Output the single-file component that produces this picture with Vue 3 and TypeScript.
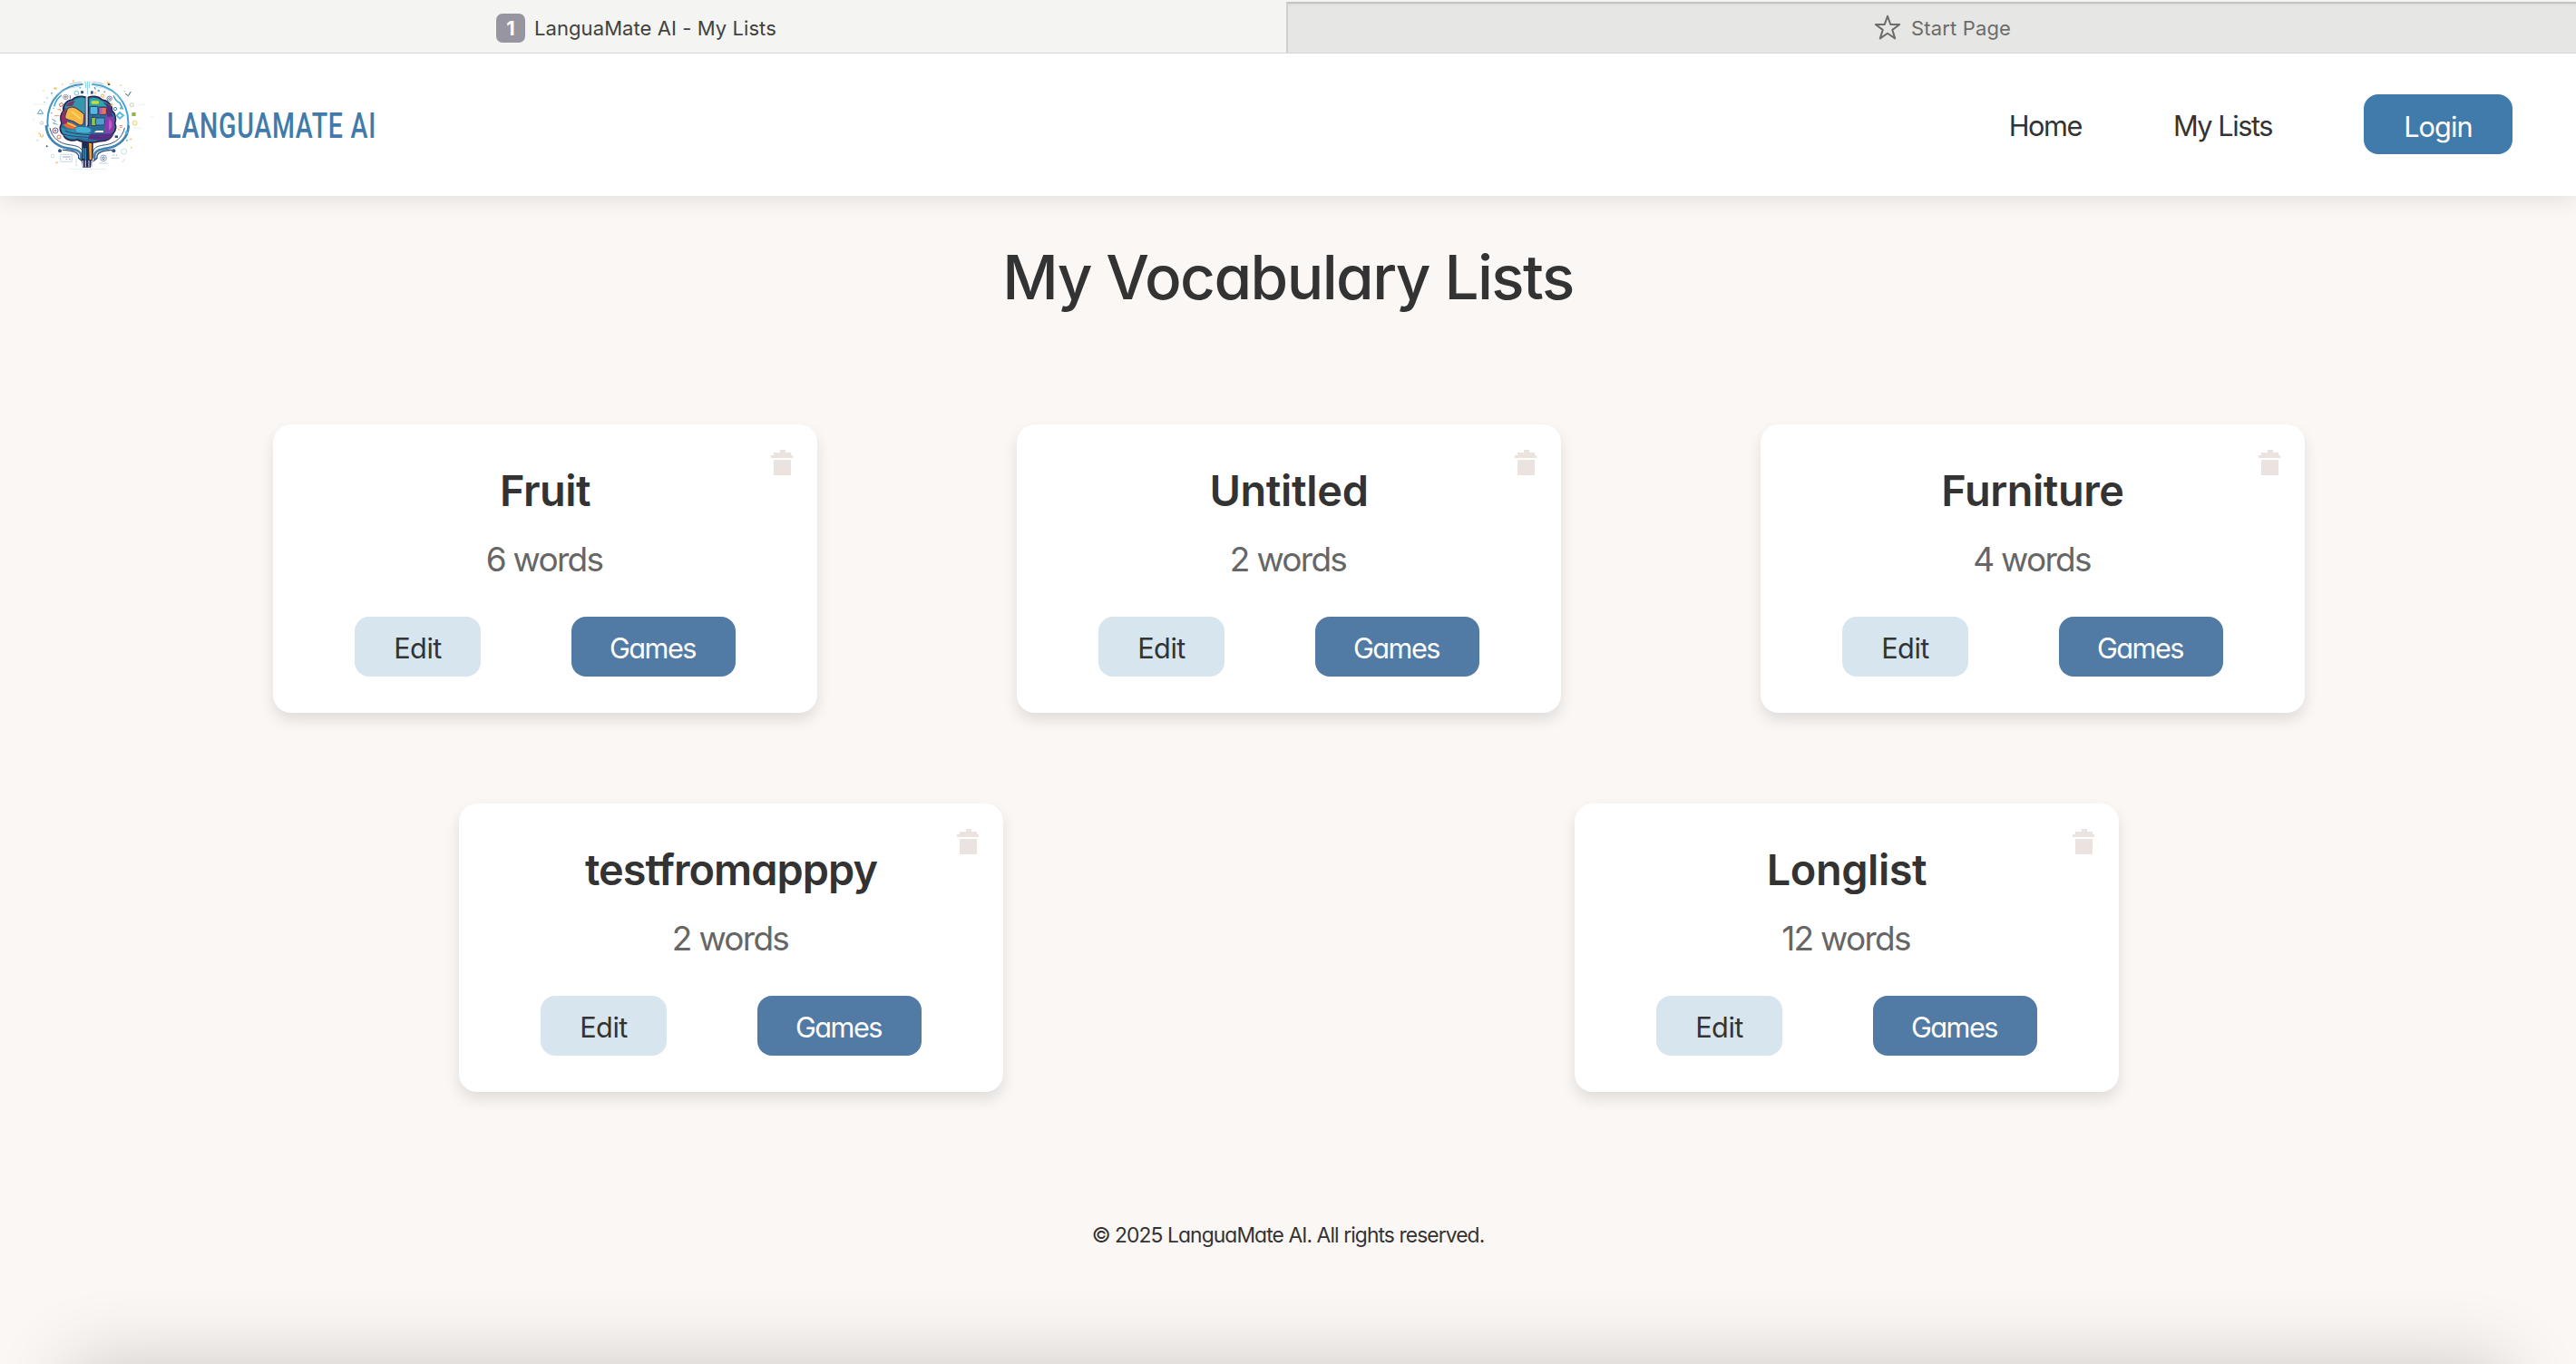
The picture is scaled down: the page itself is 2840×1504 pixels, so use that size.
<script setup lang="ts">
interface VocabList {
  name: string
  words: number
  tracking: number
}

const rows: VocabList[][] = [
  [
    { name: 'Fruit', words: 6, tracking: -0.5 },
    { name: 'Untitled', words: 2, tracking: -0.3 },
    { name: 'Furniture', words: 4, tracking: -0.4 },
  ],
  [
    { name: 'testfromapppy', words: 2, tracking: -0.95 },
    { name: 'Longlist', words: 12, tracking: -0.4 },
  ],
]
</script>

<template>
  <div class="page">
    <div class="tabs">
      <div class="tab tab-active">
        <span class="badge">1</span>
        <span class="tab-title">LanguaMate AI - My Lists</span>
      </div>
      <div class="tab tab-idle">
        <svg class="star" viewBox="0 0 30 28" width="30" height="28">
          <path d="M15 1.8 18.3 11H28.2L20.3 16.9 23.2 26.4 15 20.7 6.8 26.4 9.7 16.9 1.8 11H11.7Z" fill="none" stroke="#6c6c6a" stroke-width="2" stroke-linejoin="round" />
        </svg>
        <span class="tab-title">Start Page</span>
      </div>
    </div>

    <header class="header">
      <div class="brand">
        <svg class="logo" viewBox="78 72 441 312" width="147" height="104">
          <!-- halo rings -->
          <g fill="none" stroke-linecap="round">
            <path d="M272 99C205 101 158 152 157 222C157 228 158 232 158 238" stroke="#4a93c0" stroke-width="6" />
            <path d="M306 99C372 102 422 152 424 222V238" stroke="#4aa5cc" stroke-width="6" />
            <path d="M153 238C156 275 182 303 222 310C246 314 262 317 268 330V345" stroke="#3f84b2" stroke-width="8" />
            <path d="M425 238C423 275 396 303 356 310C332 314 318 317 313 330V345" stroke="#3f84b2" stroke-width="8" />
            <path d="M165 244C172 276 196 294 228 299C254 302 268 306 274 322M412 244C404 276 382 294 350 299C326 302 312 306 307 322" stroke="#2f5379" stroke-width="3" />
            <path d="M208 316C240 318 254 322 260 334V343L272 353M370 316C340 318 326 322 321 334V343L309 353" stroke="#34507b" stroke-width="4" />
            <path d="M172 150Q200 112 262 106M316 106Q378 114 406 154" stroke="#9bd3e5" stroke-width="2" />
            <path d="M232 98Q250 92 270 92M306 92Q326 91 342 98" stroke="#7fa9c6" stroke-width="2" />
            <path d="M180 170Q184 150 202 136M376 138Q384 156 396 160L406 180" stroke="#45a5cd" stroke-width="5" />
            <path d="M283 110V94Q283 90 280 90M289 132V90M295 110V94Q295 90 298 90" stroke="#7ccfe3" stroke-width="3" />
          </g>
          <!-- stem -->
          <path d="M271 284H308V340L300 374H274L270 352Z" fill="#202b50" />
          <path d="M294 290H303V348H296Z" fill="#f1a43a" />
          <path d="M276 310V345M283 310V350" stroke="#3c91be" stroke-width="4" />
          <path d="M274 352V370M283 352V372M294 352V372M303 352V370" stroke="#c7b5d8" stroke-width="4" stroke-linecap="round" />
          <!-- brain -->
          <path d="M284 142C268 134 246 142 238 150C218 152 206 172 210 186C198 200 200 218 204 228C194 244 200 260 210 266C216 284 240 288 256 282C270 292 310 294 330 287C352 288 370 278 372 264C386 252 384 236 380 228C386 210 380 194 370 186C372 168 356 152 338 150C326 138 304 136 292 142V236H284Z" fill="#2a6d96" stroke="#28244f" stroke-width="5" stroke-linejoin="round" />
          <path d="M281 146V196L246 172L216 178C216 162 230 154 242 154C252 144 268 140 281 146Z" fill="#3597ad" />
          <path d="M218 172C224 158 238 154 248 154L240 170Z" fill="#793768" />
          <path d="M207 190L220 182L216 208L226 226L208 232C201 216 204 204 207 190Z" fill="#8f3169" />
          <path d="M224 178Q240 170 252 178L274 194Q280 198 278 206L276 228Q274 236 264 234L244 222L220 214Q213 210 216 201Z" fill="#f6b944" stroke="#552c4c" stroke-width="3" />
          <path d="M236 188 266 212" stroke="#ffdc82" stroke-width="4" />
          <path d="M208 232L236 226L256 238L248 248L222 244Z" fill="#e66e36" />
          <path d="M222 226 252 240" stroke="#ffc24d" stroke-width="5" />
          <path d="M296 146Q320 140 334 152L354 162V172H296Z" fill="#2ca7ab" />
          <rect x="302" y="154" width="25" height="10" rx="4" fill="#d5d936" />
          <path d="M340 158Q368 164 368 188L374 206H354V172Z" fill="#543080" />
          <rect x="297" y="172" width="27" height="27" rx="5" fill="#55b9df" stroke="#233763" stroke-width="3" />
          <rect x="327" y="175" width="25" height="24" rx="4" fill="#e77850" stroke="#4d2e69" stroke-width="3" />
          <path d="M330 178H338V196H330Z" fill="#ad62b6" />
          <path d="M350 206H374Q382 218 376 230Q384 244 368 260L344 262Z" fill="#8a3dac" />
          <path d="M362 212Q380 236 360 252V232Z" fill="#c45fca" />
          <rect x="302" y="208" width="18" height="28" rx="4" fill="#92c744" stroke="#26365c" stroke-width="3" />
          <rect x="316" y="210" width="30" height="24" rx="5" fill="#4e9fca" stroke="#333b77" stroke-width="3" />
          <path d="M202 242Q224 252 250 248L286 260H366Q350 282 320 282L262 276Q224 284 208 264Z" fill="#2b93b2" />
          <path d="M300 262H378Q370 284 330 284L290 280Z" fill="#563084" />
          <path d="M248 242Q260 236 288 240Q304 244 302 254Q298 262 276 261L250 258Z" fill="#43b3d5" stroke="#286286" stroke-width="2" />
          <path d="M204 262Q240 276 330 274M214 252Q240 264 300 266" fill="none" stroke="#39386f" stroke-width="3" />
          <path d="M318 252 342 252V258H312Z" fill="#fff" />
          <path d="M286 140V238" stroke="#b9e1ec" stroke-width="5" />
          <!-- orbiting glyphs -->
          <g fill="none" stroke-width="3">
            <path d="M124 196 133 182 143 196Z" stroke="#5aa6cc" />
            <path d="M415 130 424 137 433 123" stroke="#3c5f87" />
            <circle cx="217" cy="141" r="8" stroke="#a698a5" /><circle cx="217" cy="141" r="3" stroke="#80768c" />
            <circle cx="253" cy="128" r="7" stroke="#69c0d7" /><circle cx="362" cy="146" r="8" stroke="#6e7b99" /><circle cx="362" cy="146" r="3" stroke="#6e7b99" />
            <circle cx="339" cy="137" r="5" stroke="#eeb04c" /><circle cx="381" cy="180" r="5" stroke="#4485ae" />
            <circle cx="183" cy="252" r="9" stroke="#77607f" /><circle cx="183" cy="252" r="3" stroke="#77607f" />
            <circle cx="195" cy="273" r="6" stroke="#e37554" /><circle cx="410" cy="321" r="9" stroke="#a7d3e4" stroke-width="2" />
            <circle cx="138" cy="227" r="5" stroke="#b8cbd8" /><circle cx="446" cy="227" r="7" stroke="#efc678" /><circle cx="436" cy="167" r="6" stroke="#b8d6ab" />
            <circle cx="174" cy="336" r="5" stroke="#b6d3df" stroke-width="2" />
            <circle cx="342" cy="343" r="10" stroke="#8d9cb9" /><circle cx="342" cy="343" r="4" stroke="#5f7193" />
            <path d="M328 360H357M368 343H394M372 335 376 330 380 336M386 330V337" stroke="#a3b2c8" stroke-width="2" />
            <rect x="200" y="331" width="38" height="24" rx="2" stroke="#a7c8db" stroke-width="2" />
            <path d="M207 339H233M218 347H222M228 347H233" stroke="#95a7c3" />
            <path d="M252 344V366Q254 372 256 366M402 355Q412 355 413 344" stroke="#aed4e2" stroke-width="2" />
            <path d="M126 262Q132 258 134 266Q132 276 142 272V264" stroke="#f1b84b" />
            <path d="M196 165 204 160 210 166 200 174Z" stroke="#bf6e51" /><path d="M190 182H200V188M180 203H196" stroke="#e69a68" />
            <path d="M172 214 184 220 176 228 190 232M168 194H173M175 178H179" stroke="#5aa5c7" />
            <path d="M386 202 396 192 408 202 396 212Z" stroke="#59badb" stroke-width="6" />
            <path d="M364 166 372 162M366 170 374 167" stroke="#eda144" />
            <path d="M394 236H406M396 241H404" stroke="#e18d68" /><path d="M232 136V146M270 120V130M312 108 316 116" stroke="#426d98" />
            <path d="M112 165H152M498 205H508M456 168 480 165M440 242 470 245" stroke="#d9e9ec" stroke-width="2" />
            <path d="M228 379H354" stroke="#dceaf0" stroke-width="2" />
          </g>
          <g fill="#f3c878"><rect x="178" y="109" width="10" height="7" /><rect x="240" y="85" width="6" height="6" /><rect x="354" y="91" width="8" height="9" /><rect x="122" y="282" width="5" height="4" /><rect x="184" y="355" width="7" height="6" /><rect x="390" y="246" width="7" height="5" /><rect x="204" y="96" width="4" height="5" /><rect x="397" y="101" width="5" height="4" /><rect x="428" y="278" width="8" height="5" /><rect x="142" y="119" width="4" height="4" /><rect x="432" y="306" width="5" height="4" /><rect x="312" y="124" width="5" height="7" /></g>
          <g fill="#6bb5d3"><circle cx="156" cy="144" r="2" /><circle cx="147" cy="158" r="2" /><circle cx="171" cy="128" r="3" /><circle cx="412" cy="122" r="2" /><circle cx="418" cy="258" r="5" /><circle cx="326" cy="120" r="4" /><circle cx="346" cy="124" r="3" /><circle cx="265" cy="110" r="3" /><circle cx="400" cy="178" r="4" /><circle cx="420" cy="284" r="3" /></g>
          <circle cx="112" cy="214" r="2" fill="#cfdfe6" />
          <g fill="#33547e"><circle cx="198" cy="319" r="6" /><circle cx="376" cy="319" r="6" /><circle cx="155" cy="304" r="3" /><circle cx="272" cy="125" r="5" /><rect x="300" y="121" width="8" height="10" /><rect x="380" y="268" width="10" height="8" /><rect x="357" y="97" width="7" height="5" /></g>
          <rect x="436" y="192" width="13" height="12" fill="#8eb84b" />
        </svg>
        <svg class="wordmark" viewBox="0 0 260 56" width="260" height="56">
          <text x="0" y="40" textLength="231" lengthAdjust="spacingAndGlyphs">LANGUAMATE AI</text>
        </svg>
      </div>
      <nav class="nav">
        <a>Home</a>
        <a>My Lists</a>
        <a class="login">Login</a>
      </nav>
    </header>

    <main class="main">
      <h1>My Vocabulary Lists</h1>
      <div v-for="(row, i) in rows" :key="i" class="row">
        <section v-for="list in row" :key="list.name" class="card">
          <svg class="trash" viewBox="0 0 24 28" width="24" height="28">
            <path d="M10 0H16V3H22V6H24V9H0V6H3V3H10ZM3 11H22V28H3Z" fill="#ebe3e0" />
          </svg>
          <h2 :style="{ letterSpacing: list.tracking + 'px' }">{{ list.name }}</h2>
          <p>{{ list.words }} words</p>
          <div class="actions">
            <button class="edit">Edit</button>
            <button class="games">Games</button>
          </div>
        </section>
      </div>
    </main>

    <footer class="footer">© 2025 LanguaMate AI. All rights reserved.</footer>
    <div class="dock-shadow"></div>
  </div>
</template>

<style>
body {
  margin: 0;
  background: #fbf7f4;
}
</style>

<style scoped>
.page {
  position: relative;
  width: 2840px;
  height: 1504px;
  overflow: hidden;
  display: flex;
  flex-direction: column;
  background: #fbf7f4;
  color: #333;
  font-family: Inter, "Liberation Sans", sans-serif;
  font-feature-settings: "cv11";
}
.tabs {
  position: relative;
  z-index: 1;
  display: flex;
  flex: none;
  box-sizing: border-box;
  height: 59px;
  border-bottom: 1px solid #d6d6d4;
  background: #f4f4f2;
  font-size: 22px;
  font-feature-settings: normal;
  letter-spacing: 0.08px;
}
.tab {
  display: flex;
  align-items: center;
  box-sizing: border-box;
  padding-top: 4px;
}
.tab-active {
  width: 1418px;
  padding-left: 547px;
  gap: 10px;
  color: #424240;
}
.tab-idle {
  flex: 1;
  margin-top: 2px;
  padding-top: 2px;
  padding-left: 646px;
  gap: 11px;
  border-left: 2px solid #cfcfcd;
  background: #e6e6e4;
  box-shadow: inset 0 2px 0 #c3c3c1, inset 0 5px 3px -2px #d8d8d6;
  color: #6c6c6a;
  letter-spacing: 0.15px;
}
.star {
  margin-top: -2px;
}
.badge {
  width: 32px;
  height: 32px;
  line-height: 33px;
  border-radius: 7px;
  background: #9795a0;
  color: #fff;
  text-align: center;
  font-weight: 700;
}
.header {
  display: flex;
  flex: none;
  justify-content: space-between;
  align-items: flex-start;
  box-sizing: border-box;
  height: 157px;
  padding: 25px 70px 0 26px;
  background: #fff;
  box-shadow: 0 4px 24px rgba(0, 0, 0, 0.1);
}
.brand {
  display: flex;
  gap: 11px;
}
.wordmark {
  margin-top: 28px;
  overflow: visible;
  font-family: Roboto, sans-serif;
  font-size: 39.4px;
  font-weight: 500;
  letter-spacing: 1px;
  fill: #407bab;
}
.nav {
  display: flex;
  align-items: center;
  gap: 101px;
  margin-top: 20px;
  font-size: 30.7px;
  letter-spacing: -1.45px;
}
.nav a {
  padding-top: 3px;
}
.nav .login {
  box-sizing: border-box;
  width: 164px;
  height: 66px;
  line-height: 65px;
  border-radius: 16px;
  background: #407bab;
  color: #fff;
  text-align: center;
  letter-spacing: -0.9px;
}
.main {
  display: flex;
  flex-direction: column;
  gap: 100px;
}
h1 {
  margin: 49px 0 -18px;
  height: 81px;
  line-height: 81px;
  text-align: center;
  font-size: 67.4px;
  font-weight: 500;
  letter-spacing: -1.55px;
}
.row {
  display: flex;
  justify-content: space-around;
  width: 2460px;
  margin-left: 191px;
}
.row:nth-of-type(1) {
  margin-top: 40px;
}
.card {
  position: relative;
  box-sizing: border-box;
  width: 600px;
  height: 318px;
  padding-top: 45px;
  border-radius: 20px;
  background: #fff;
  box-shadow: 0 8px 16px rgba(0, 0, 0, 0.11);
  text-align: center;
}
.trash {
  position: absolute;
  top: 28px;
  right: 27px;
}
h2 {
  margin: 0;
  line-height: 56px;
  font-size: 46.8px;
  font-weight: 600;
}
p {
  margin: 24px 0 39px;
  padding-right: 2px;
  line-height: 48px;
  font-size: 37px;
  letter-spacing: -1.7px;
  color: #666;
}
.actions {
  display: flex;
  justify-content: center;
  gap: 100px;
}
button {
  height: 66px;
  padding: 2px 0 0;
  border: 0;
  border-radius: 16px;
  font: inherit;
  font-feature-settings: inherit;
  font-size: 30.7px;
}
.edit {
  width: 139px;
  background: #d7e5ee;
  color: #333;
  letter-spacing: -0.5px;
}
.games {
  width: 181px;
  padding-right: 2px;
  background: #517ba4;
  color: #fff;
  letter-spacing: -1.5px;
}
.footer {
  margin-top: 142px;
  line-height: 32px;
  text-align: center;
  font-size: 22.8px;
  letter-spacing: -0.9px;
}
.dock-shadow {
  position: absolute;
  left: 76px;
  right: 76px;
  top: 1504px;
  height: 200px;
  box-shadow: 0 0 84px rgba(0, 0, 0, 0.19);
}
</style>
